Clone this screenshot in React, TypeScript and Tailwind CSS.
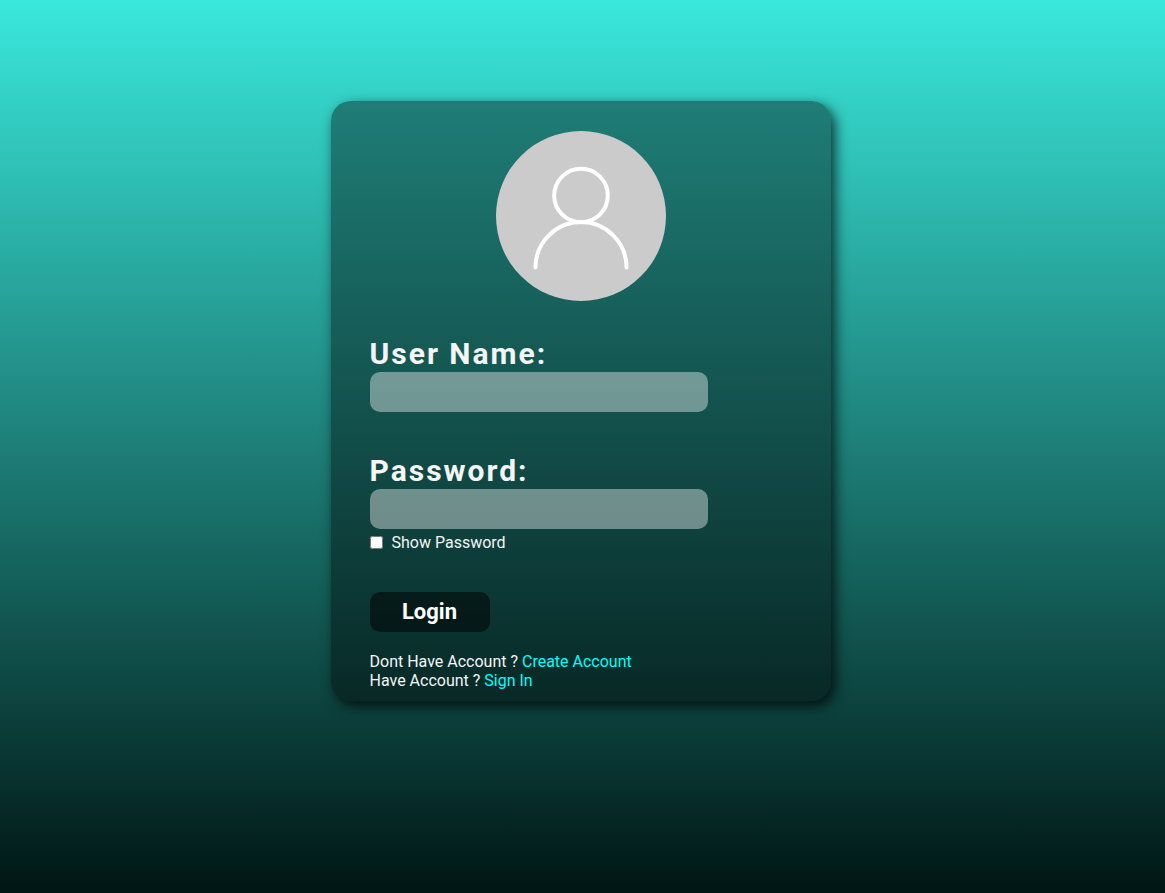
export default function App() {
  return (
    <main className="h-screen overflow-hidden bg-[linear-gradient(#3ae8dc,#001614)] pt-[101px] pl-[330.5px] font-['Roboto',sans-serif] text-white">
      <form
        className="flex h-[600px] w-[500px] flex-col items-start rounded-[20px] bg-[linear-gradient(rgba(0,0,0,0.4),rgba(0,0,0,0.4))] px-[39px] pt-[30px] shadow-[4px_5px_13px_rgba(0,0,0,0.75)]"
        onSubmit={(e) => e.preventDefault()}
      >
        <div className="ml-[126px] h-[170px] w-[170px] rounded-full bg-[#cbcbcb]">
          <svg viewBox="0 0 170 170" className="h-full w-full" fill="none" stroke="white" strokeWidth="4" strokeLinecap="round">
            <circle cx="85" cy="64.5" r="26.8" />
            <path d="M39.5 136.5a45.5 45.5 0 0 1 91 0" />
          </svg>
        </div>
        <label htmlFor="user" className="mt-[35px] text-[30px] leading-[36px] font-bold tracking-[2px] text-[#f5f5f5]">User Name:</label>
        <input id="user" className="h-10 w-[338px] rounded-[10px] bg-white/40 px-3 outline-none" />
        <label htmlFor="password" className="mt-[41px] text-[30px] leading-[36px] font-bold tracking-[2px] text-[#f5f5f5]">Password:</label>
        <input id="password" type="password" className="h-10 w-[338px] rounded-[10px] bg-white/40 px-3 outline-none" />
        <label className="mt-1 flex h-[19px] items-center text-base leading-[19px] text-[#f5f5f5]">
          <input type="checkbox" className="mr-[9px] h-[13px] w-[13px]" />
          Show Password
        </label>
        <button className="mt-10 h-10 w-[120px] rounded-[10px] bg-black/50 pb-0.5 text-[22px] font-bold text-white">Login</button>
        <p className="mt-5 text-base leading-[19px] text-[#f5f5f5]">
          Dont Have Account ? <a className="text-[#00ffff]">Create Account</a>
          <br />
          Have Account ? <a className="text-[#00ffff]">Sign In</a>
        </p>
      </form>
    </main>
  );
}
